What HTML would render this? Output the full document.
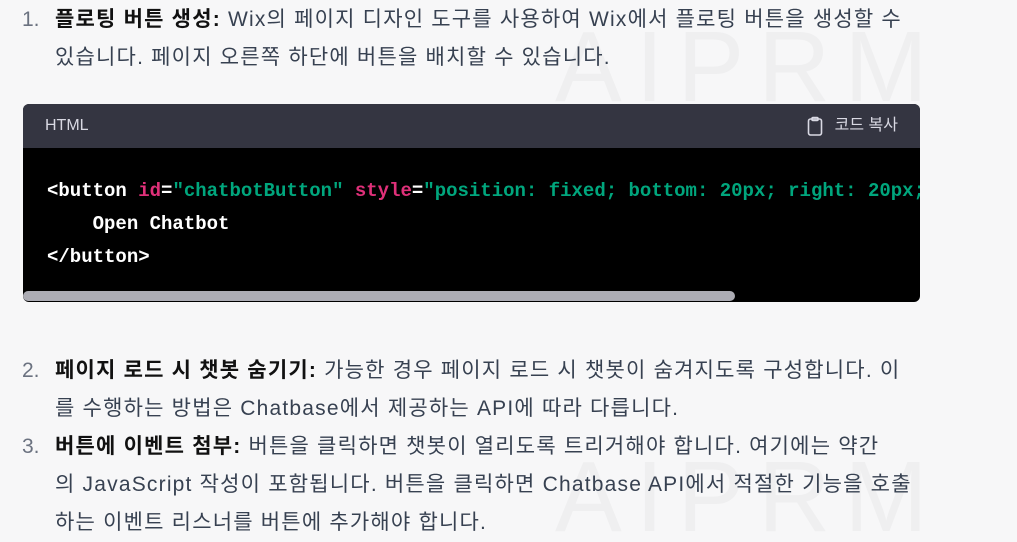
<!DOCTYPE html>
<html><head><meta charset="utf-8"><style>
html,body{margin:0;width:1017px;height:542px;overflow:hidden}
body{background:#f7f7f8;position:relative;font-family:"Liberation Sans","Noto Sans CJK KR",sans-serif;color:#374151;}
.wm{position:absolute;color:#efeff0;font-family:"Liberation Sans",sans-serif;font-size:100px;letter-spacing:14px;left:555px;z-index:0;white-space:nowrap;width:462px;overflow:hidden}
.p{position:absolute;left:55px;font-size:21px;letter-spacing:1.2px;line-height:38px;width:950px;z-index:1;white-space:nowrap}
.n{position:absolute;left:-33px;color:#6b7280;letter-spacing:0}
b{color:#111;font-weight:bold}
.code{position:absolute;left:23px;top:104px;width:897px;height:198px;background:#000;border-radius:6px;overflow:hidden;z-index:1}
.hd{height:44px;background:#343541;color:#d9d9e3;font-size:16px;line-height:44px;padding-left:22px;position:relative}
.cp{position:absolute;right:22px;top:0;display:flex;align-items:center;gap:10px}
pre{margin:0;position:absolute;top:71px;left:24px;font-family:"Liberation Mono",monospace;font-size:19px;line-height:33px;color:#fff;font-weight:bold;white-space:pre}
.r{color:#df3079}.g{color:#00a67d}
.sb{position:absolute;left:0;top:187px;width:712px;height:10px;background:#acacb4;border-radius:5px}
</style></head><body>
<div class="wm" style="top:10px">AIPRM</div>
<div class="wm" style="top:440px">AIPRM</div>
<div class="p" style="top:1px"><span class="n">1.</span><b>플로팅 버튼 생성:</b> Wix의 페이지 디자인 도구를 사용하여 Wix에서 플로팅 버튼을 생성할 수<br>있습니다. 페이지 오른쪽 하단에 버튼을 배치할 수 있습니다.</div>
<div class="code"><div class="hd">HTML<div class="cp"><svg width="20" height="20" viewBox="0 0 20 20" fill="none" stroke="#d9d9e3" stroke-width="1.6"><rect x="3.5" y="3" width="13" height="16" rx="2"/><rect x="7" y="1.5" width="6" height="3" rx="1"/></svg>코드 복사</div></div>
<pre>&lt;button <span class="r">id</span>=<span class="g">"chatbotButton"</span> <span class="r">style</span>=<span class="g">"position: fixed; bottom: 20px; right: 20px; z-index: 9999;"</span>&gt;
    Open Chatbot
&lt;/button&gt;</pre>
<div class="sb"></div></div>
<div class="p" style="top:352px"><span class="n">2.</span><b>페이지 로드 시 챗봇 숨기기:</b> 가능한 경우 페이지 로드 시 챗봇이 숨겨지도록 구성합니다. 이<br>를 수행하는 방법은 Chatbase에서 제공하는 API에 따라 다릅니다.</div>
<div class="p" style="top:428px"><span class="n">3.</span><b>버튼에 이벤트 첨부:</b> 버튼을 클릭하면 챗봇이 열리도록 트리거해야 합니다. 여기에는 약간<br>의 JavaScript 작성이 포함됩니다. 버튼을 클릭하면 Chatbase API에서 적절한 기능을 호출<br>하는 이벤트 리스너를 버튼에 추가해야 합니다.</div>
</body></html>
